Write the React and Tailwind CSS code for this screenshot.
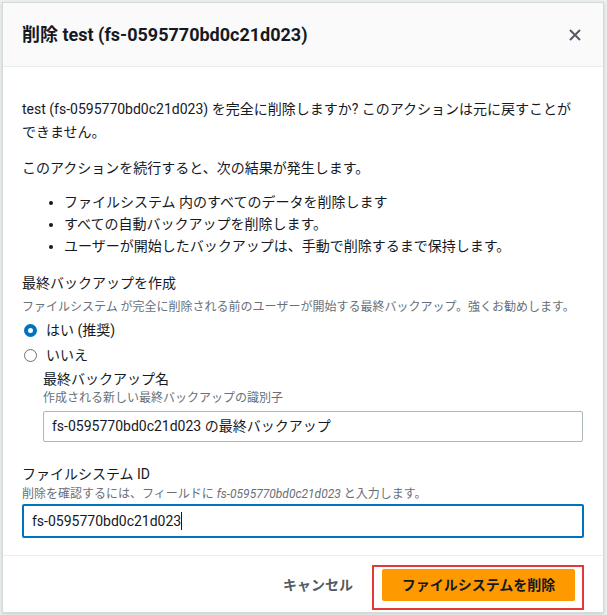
import React from 'react';

const FONT = { fontFamily: 'Roboto, "Noto Sans CJK JP", sans-serif' };

function Radio({ checked, label }) {
    return (
        <label className="flex items-center h-[25px] gap-[9px] text-[14px] text-[#16191f]">
            {checked ? (
                <span className="w-[13px] h-[13px] rounded-full border-[4px] border-[#0073bb] bg-white ml-[2px]" />
            ) : (
                <span className="w-[13px] h-[13px] rounded-full border-[1.5px] border-[#687078] bg-white ml-[2px]" />
            )}
            <span>{label}</span>
        </label>
    );
}

export default function App() {
    const fsId = 'fs-0595770bd0c21d023';

    return (
        <div className="w-[607px] h-[615px] bg-[#eef0f0] pt-[2px] pl-[2px] overflow-hidden" style={FONT}>
            <div className="w-[602px] h-[611px] bg-white border border-[#d5dbdb] shadow-[0_1px_3px_rgba(0,0,0,0.15)] flex flex-col">
                {/* Header */}
                <div className="h-[64px] shrink-0 bg-[#fafafa] border-b border-[#eaeded] flex items-center justify-between pl-[19px] pr-[20px]">
                    <h2 className="text-[18px] font-bold text-[#16191f]">削除 test ({fsId})</h2>
                    <button className="w-[16px] h-[16px] flex items-center justify-center text-[#545b64]">
                        <svg width="12" height="12" viewBox="0 0 12 12" fill="none">
                            <path d="M1 1L11 11M11 1L1 11" stroke="currentColor" strokeWidth="2" />
                        </svg>
                    </button>
                </div>

                {/* Body */}
                <div className="flex-1 pt-[31px] pl-[19px] pr-[19px] text-[#16191f]">
                    <p className="text-[14px] leading-[23px]">
                        test ({fsId}) を完全に削除しますか? このアクションは元に戻すことが<br />できません。
                    </p>
                    <p className="text-[14px] leading-[23px] mt-[13px]">
                        このアクションを続行すると、次の結果が発生します。
                    </p>
                    <ul className="list-disc pl-[42px] mt-[11px] text-[14px] leading-[22px]">
                        <li>ファイルシステム 内のすべてのデータを削除します</li>
                        <li>すべての自動バックアップを削除します。</li>
                        <li>ユーザーが開始したバックアップは、手動で削除するまで保持します。</li>
                    </ul>

                    <div className="mt-[15px] text-[14px] leading-[22px]">最終バックアップを作成</div>
                    <div className="mt-[4px] text-[12px] leading-[18px] text-[#687078]">
                        ファイルシステム が完全に削除される前のユーザーが開始する最終バックアップ。強くお勧めします。
                    </div>
                    <div className="mt-[2px] flex flex-col">
                        <Radio checked label="はい (推奨)" />
                        <Radio label="いいえ" />
                    </div>

                    <div className="pl-[21px]">
                        <div className="text-[14px] leading-[20px] mt-[1px]">最終バックアップ名</div>
                        <div className="text-[12px] leading-[18px] text-[#687078]">作成される新しい最終バックアップの識別子</div>
                        <div className="mt-[4px] h-[31px] w-[540px] border border-[#aab7b8] rounded-[2px] flex items-center pl-[8px] text-[14px]">
                            {fsId} の最終バックアップ
                        </div>
                    </div>

                    <div className="mt-[21px] text-[14px] leading-[22px]">ファイルシステム ID</div>
                    <div className="text-[12px] leading-[18px] text-[#687078]">
                        削除を確認するには、フィールドに <i>{fsId}</i> と入力します。
                    </div>
                    <div className="mt-[1px] h-[34px] w-[562px] border-2 border-[#0073bb] rounded-[2px] flex items-center pl-[8px] text-[14px]">
                        <span>{fsId}</span>
                        <span className="w-[1px] h-[18px] bg-[#16191f]" />
                    </div>
                </div>

                {/* Footer */}
                <div className="h-[57px] shrink-0 border-t border-[#eaeded] flex justify-end items-start pt-[9px] pr-[19px]">
                    <button className="mt-[4px] h-[32px] px-[19px] text-[14px] font-bold text-[#545b64]">
                        キャンセル
                    </button>
                    <div className="border-2 border-[#e53935] pl-[8px] pr-[7px] pt-[2px] pb-[7px]">
                        <button className="w-[193px] h-[32px] bg-[#ff9900] rounded-[2px] text-[14px] font-bold text-[#16191f]">
                            ファイルシステムを削除
                        </button>
                    </div>
                </div>
            </div>
        </div>
    );
}
